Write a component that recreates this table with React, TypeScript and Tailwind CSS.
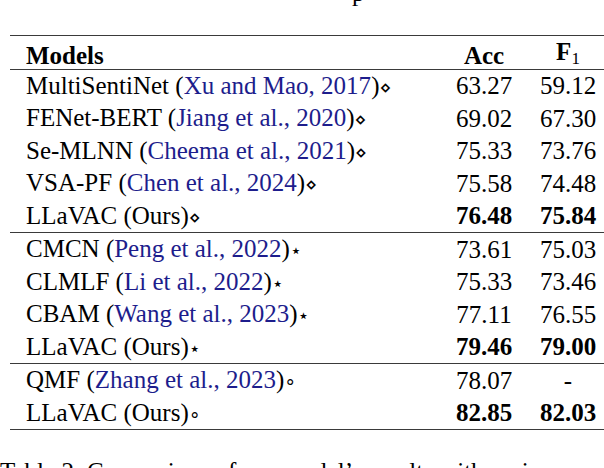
import React from "react";

// marks kept as escapes so the source stays plain ASCII
const DIA = "\u22C4";
const STAR = "\u22C6";
const RING = "\u2218";

type Row = { model: string; cite?: string; mark: string; acc: string; f1: string; bold?: boolean };

const groups: Row[][] = [
  [
    { model: "MultiSentiNet", cite: "Xu and Mao, 2017", mark: DIA, acc: "63.27", f1: "59.12" },
    { model: "FENet-BERT", cite: "Jiang et al., 2020", mark: DIA, acc: "69.02", f1: "67.30" },
    { model: "Se-MLNN", cite: "Cheema et al., 2021", mark: DIA, acc: "75.33", f1: "73.76" },
    { model: "VSA-PF", cite: "Chen et al., 2024", mark: DIA, acc: "75.58", f1: "74.48" },
    { model: "LLaVAC", mark: DIA, acc: "76.48", f1: "75.84", bold: true },
  ],
  [
    { model: "CMCN", cite: "Peng et al., 2022", mark: STAR, acc: "73.61", f1: "75.03" },
    { model: "CLMLF", cite: "Li et al., 2022", mark: STAR, acc: "75.33", f1: "73.46" },
    { model: "CBAM", cite: "Wang et al., 2023", mark: STAR, acc: "77.11", f1: "76.55" },
    { model: "LLaVAC", mark: STAR, acc: "79.46", f1: "79.00", bold: true },
  ],
  [
    { model: "QMF", cite: "Zhang et al., 2023", mark: RING, acc: "78.07", f1: "-" },
    { model: "LLaVAC", mark: RING, acc: "82.85", f1: "82.03", bold: true },
  ],
];

function Mark({ m }: { m: string }) {
  return <span className="font-[family-name:DejaVu_Sans] text-[19px]">{m}</span>;
}

function TableRow({ r }: { r: Row }) {
  return (
    <div className="grid grid-cols-[1fr_84px_84px] h-[32.5px] items-center">
      <div className="pl-[16px] whitespace-nowrap">
        {r.model}{" "}
        {r.cite ? (
          <>
            (<span className="text-[#1d1d8c]">{r.cite}</span>)
          </>
        ) : (
          "(Ours)"
        )}
        <Mark m={r.mark} />
      </div>
      <div className={r.bold ? "text-center font-bold" : "text-center"}>{r.acc}</div>
      <div className={r.bold ? "text-center font-bold" : "text-center"}>{r.f1}</div>
    </div>
  );
}

export default function App() {
  return (
    <div className="w-[604px] h-[468px] overflow-hidden bg-white text-black font-[family-name:Liberation_Serif] text-[25px] leading-[32px]">
      <div className="h-[6px] overflow-hidden">
        <div className="pl-[352px] -mt-[23px]">p</div>
      </div>
      <div className="ml-[10px] w-[600px] mt-[29px]">
        <div className="border-t-[1.5px] border-[#3a3a3a]" />
        <div className="grid grid-cols-[1fr_84px_84px] h-[32.5px] items-center font-bold">
          <div className="pl-[16px]">Models</div>
          <div className="text-center">Acc</div>
          <div className="text-center">
            F<span className="font-normal text-[17px] align-[-4px]">1</span>
          </div>
        </div>
        {groups.map((g, i) => (
          <div key={i} className="border-t border-[#3a3a3a]">
            {g.map((r, j) => (
              <TableRow key={j} r={r} />
            ))}
          </div>
        ))}
        <div className="border-t-[1.5px] border-[#3a3a3a]" />
      </div>
      <div className="mt-[26px] whitespace-nowrap">{"Table 2: Comparison of our model\u2019s results with various"}</div>
    </div>
  );
}
